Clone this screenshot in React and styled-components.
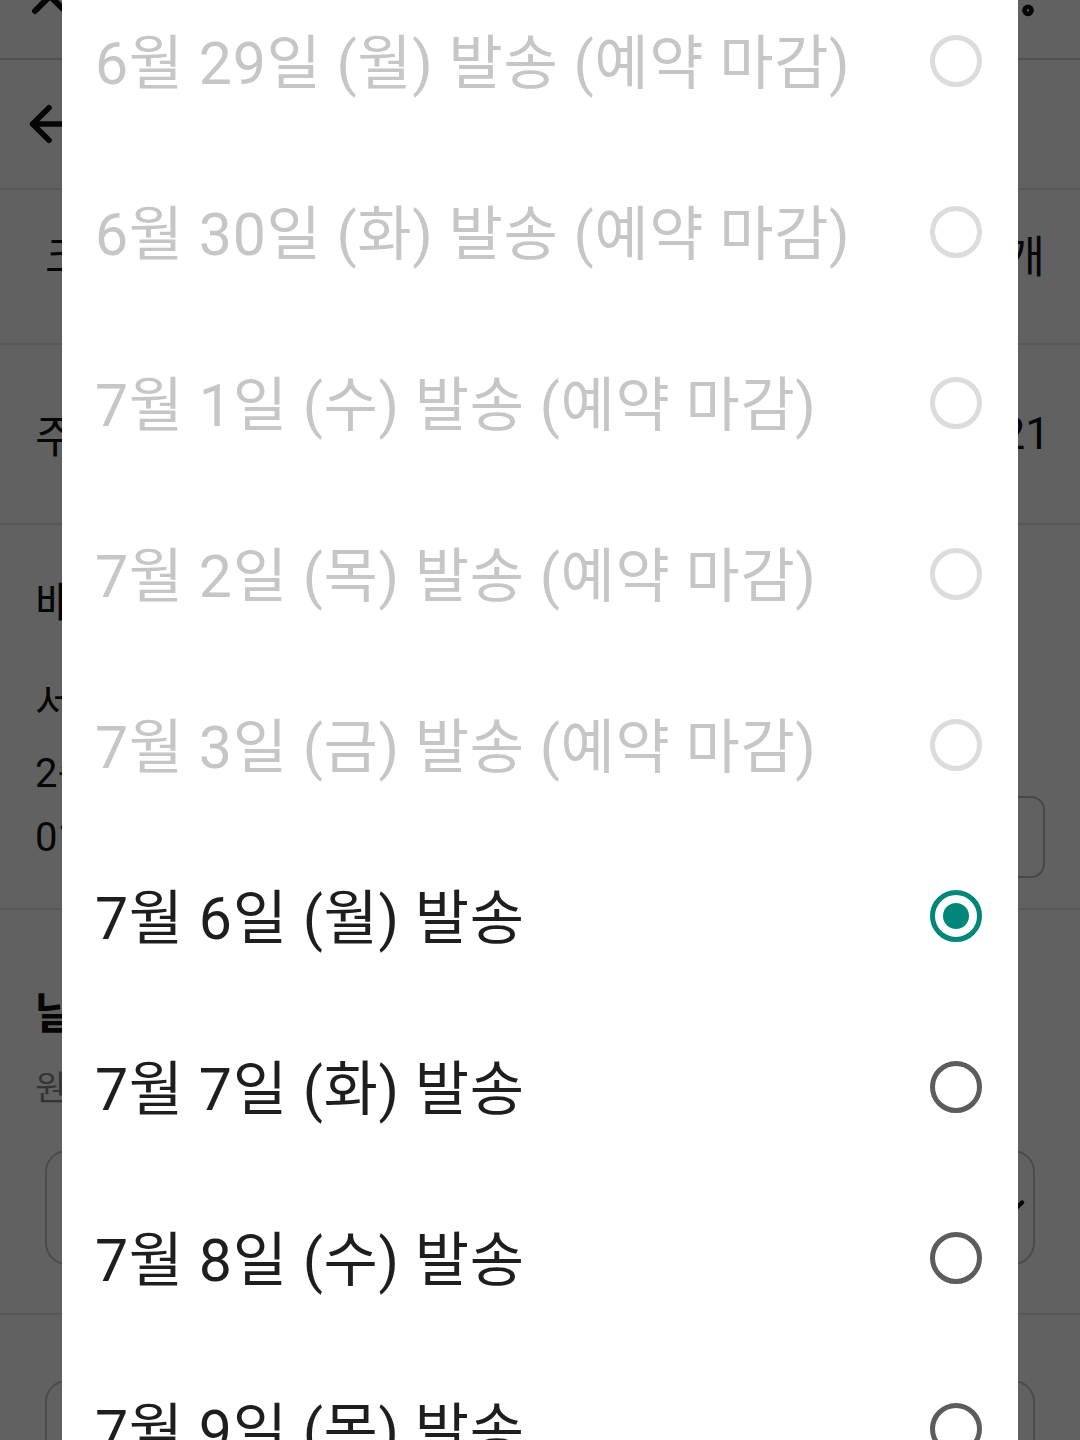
import React, { useLayoutEffect, useRef } from "react";
import styled, { createGlobalStyle } from "styled-components";
import { X, ArrowLeft, MoreVertical, ChevronDown } from "lucide-react";

const GlobalStyle = createGlobalStyle`
  html, body { margin: 0; padding: 0; }
  body { font-family: Roboto, "Noto Sans CJK KR", sans-serif; background: #fff; }
  * { box-sizing: border-box; }
`;

const Screen = styled.div`
  position: relative;
  width: 1080px;
  height: 1440px;
  overflow: hidden;
`;

const Page = styled.div`
  width: 1080px;
  height: 1440px;
  display: flex;
  flex-direction: column;
  background: #fff;
  color: #111;
  font-family: Roboto, "Noto Sans CJK KR", sans-serif;
`;

const TopBar = styled.div`
  height: 60px;
  flex: none;
  display: flex;
  justify-content: space-between;
  align-items: flex-start;
  padding: 0 24px 0 20px;
  border-bottom: 2px solid #d4d4d4;
  overflow: hidden;
  svg { margin-top: -34px; }
`;

const Header = styled.div`
  height: 130px;
  flex: none;
  display: flex;
  align-items: center;
  padding-left: 21px;
  border-bottom: 2px solid #e6e6e6;
`;

const Row = styled.div`
  height: ${(p) => p.$h}px;
  flex: none;
  display: flex;
  justify-content: space-between;
  align-items: center;
  padding: 0 ${(p) => p.$pr || 35}px ${(p) => p.$pb || 0}px ${(p) => p.$pl || 35}px;
  font-size: 44px;
  border-bottom: ${(p) => (p.$line ? "2px solid #e6e6e6" : "none")};
`;

const Block = styled.div`
  flex: none;
  display: flex;
  flex-direction: column;
  padding: ${(p) => p.$pad};
  border-bottom: ${(p) => (p.$line ? "2px solid #e6e6e6" : "none")};
`;

const Line = styled.div`
  height: ${(p) => p.$h}px;
  margin-top: ${(p) => p.$mt || 0}px;
  padding: ${(p) => (p.$inset ? "0 35px" : "0")};
  font-size: ${(p) => p.$size || 42}px;
  font-weight: ${(p) => (p.$bold ? 700 : 400)};
  color: ${(p) => p.$color || "#111"};
  display: flex;
  justify-content: space-between;
  align-items: center;
  flex: none;
`;

const SmallButton = styled.div`
  width: 150px;
  height: 82px;
  border: 2px solid #bbb;
  border-radius: 14px;
  display: flex;
  align-items: center;
  justify-content: center;
  font-size: 34px;
`;

const Select = styled.div`
  height: 115px;
  margin: ${(p) => p.$mt || 0}px 45px 0;
  border: 2px solid #c4c4c4;
  border-radius: 22px;
  display: flex;
  align-items: center;
  justify-content: space-between;
  padding: 0 0 0 30px;
  font-size: 40px;
  color: #111;
  flex: none;
`;

const Overlay = styled.div`
  position: absolute;
  inset: 0;
  background: rgba(0, 0, 0, 0.62);
`;

const Dialog = styled.div`
  position: absolute;
  top: 0;
  left: 62px;
  width: 956px;
  height: 1440px;
  background: #fff;
  overflow-y: auto;
  scrollbar-width: none;
  &::-webkit-scrollbar { display: none; }
`;

const Option = styled.div`
  height: 171px;
  display: flex;
  align-items: center;
  justify-content: space-between;
  padding: 0 36px 4px 33px;
`;

const Label = styled.span`
  font-family: Roboto, "Noto Sans CJK KR", sans-serif;
  font-size: 59px;
  letter-spacing: 0.6px;
  color: ${(p) => (p.$disabled ? "#c6c6c6" : "#1e1e1e")};
  white-space: nowrap;
`;

const Radio = styled.span`
  width: 52px;
  height: 52px;
  border-radius: 50%;
  flex: none;
  margin-top: 4px;
  border: 5px solid
    ${(p) => (p.$checked ? "#00877a" : p.$disabled ? "#dcdcdc" : "#5c5c5c")};
  display: flex;
  align-items: center;
  justify-content: center;
  &::after {
    content: "";
    width: 26px;
    height: 26px;
    border-radius: 50%;
    background: #00877a;
    display: ${(p) => (p.$checked ? "block" : "none")};
  }
`;

const options = [
  { label: "6월 26일 (금) 발송 (예약 마감)", disabled: true },
  { label: "6월 29일 (월) 발송 (예약 마감)", disabled: true },
  { label: "6월 30일 (화) 발송 (예약 마감)", disabled: true },
  { label: "7월 1일 (수) 발송 (예약 마감)", disabled: true },
  { label: "7월 2일 (목) 발송 (예약 마감)", disabled: true },
  { label: "7월 3일 (금) 발송 (예약 마감)", disabled: true },
  { label: "7월 6일 (월) 발송", checked: true },
  { label: "7월 7일 (화) 발송" },
  { label: "7월 8일 (수) 발송" },
  { label: "7월 9일 (목) 발송" },
  { label: "7월 10일 (금) 발송" },
];

export default function App() {
  const ref = useRef(null);
  useLayoutEffect(() => {
    if (ref.current) ref.current.scrollTop = 196;
  }, []);

  return (
    <>
      <GlobalStyle />
      <Screen>
        <Page>
          <TopBar>
            <X size={60} strokeWidth={2.4} color="#111" />
            <MoreVertical size={56} strokeWidth={3} color="#111" />
          </TopBar>
          <Header>
            <ArrowLeft size={56} strokeWidth={2.4} color="#111" />
          </Header>
          <Row $h={155} $pb={25} $pl={45} $line>
            <span>크림치즈 케이크 세트</span>
            <span>1개</span>
          </Row>
          <Row $h={180} $pr={30} $line>
            <span>주문일</span>
            <span>2020.06.21</span>
          </Row>
          <Block $pad="40px 35px 30px" $line>
            <Line $size={44} $h={70}>배송지</Line>
            <Line $size={40} $h={60} $mt={35}>서울시 강남구 홍길동</Line>
            <Line $size={40} $h={60} $mt={10}>
              <span>2층 201호 상세주소</span>
            </Line>
            <Line $size={40} $h={82} $mt={-4}>
              <span>010-1234-5678</span>
              <SmallButton>변경</SmallButton>
            </Line>
          </Block>
          <Block $pad="70px 0 48px" $line>
            <Line $size={44} $h={60} $bold $inset>날짜 선택</Line>
            <Line $size={34} $h={40} $mt={25} $color="#888" $inset>원하시는 발송일을 선택해 주세요</Line>
            <Select $mt={45}>
              <span>7월 6일 (월) 발송</span>
              <ChevronDown size={44} strokeWidth={2.4} color="#111" />
            </Select>
          </Block>
          <Block $pad="65px 0 0">
            <Select />
          </Block>
        </Page>
        <Overlay />
        <Dialog ref={ref}>
          {options.map((o) => (
            <Option key={o.label}>
              <Label $disabled={o.disabled}>{o.label}</Label>
              <Radio $checked={o.checked} $disabled={o.disabled} />
            </Option>
          ))}
        </Dialog>
      </Screen>
    </>
  );
}
